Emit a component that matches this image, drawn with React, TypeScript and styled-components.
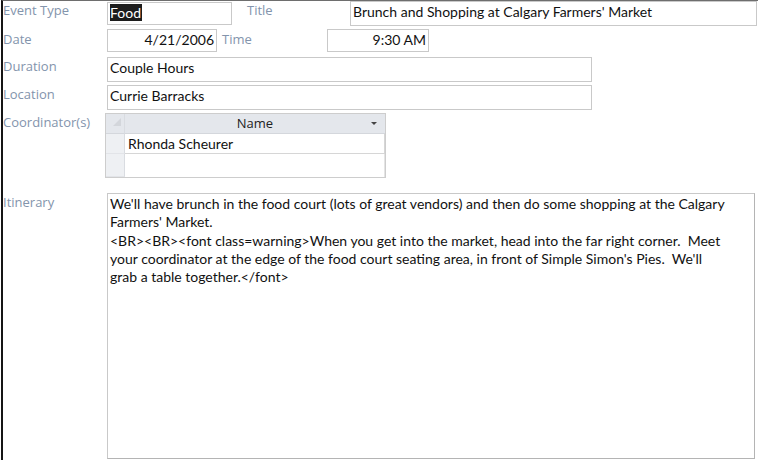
import React from "react";
import styled, { createGlobalStyle } from "styled-components";

const GlobalStyle = createGlobalStyle`
  html, body {
    margin: 0;
    padding: 0;
    background: #ffffff;
  }
  body {
    font-family: "Lato", "Open Sans", sans-serif;
  }
`;

const Frame = styled.div`
  width: 757px;
  height: 460px;
  margin-left: 1px;
  border-left: 2px solid #151515;
  border-top: 1px solid #6e6e6e;
  box-sizing: border-box;
  display: flex;
  flex-direction: column;
`;

interface RowProps {
  $height: number;
  $top?: number;
}

const Row = styled.div<RowProps>`
  display: flex;
  align-items: flex-start;
  height: ${p => p.$height}px;
  margin-top: ${p => p.$top || 0}px;
`;

interface LabelProps {
  $width?: number;
  $pad?: number;
  $indent?: number;
}

const Label = styled.div<LabelProps>`
  width: ${p => p.$width || 104}px;
  flex-shrink: 0;
  padding-top: ${p => p.$pad ?? 2}px;
  padding-left: ${p => p.$indent || 0}px;
  font-family: "Open Sans", sans-serif;
  font-size: 13px;
  line-height: 17px;
  color: #8394ac;
  box-sizing: border-box;
  white-space: nowrap;
`;

interface FieldProps {
  $width: number;
  $height: number;
  $top?: number;
  $align?: string;
}

const Field = styled.div<FieldProps>`
  width: ${p => p.$width}px;
  height: ${p => p.$height}px;
  margin-top: ${p => p.$top || 0}px;
  border: 1px solid #c9c9c9;
  box-sizing: border-box;
  padding: 1px 2px 0 2px;
  font-family: "Lato", sans-serif;
  font-size: 14px;
  line-height: 18px;
  color: #111111;
  text-align: ${p => p.$align || "left"};
  white-space: nowrap;
  overflow: hidden;
  flex-shrink: 0;
`;

const Selected = styled.span`
  background: #1c1c1c;
  color: #ffffff;
  padding: 0 1px 0 0;
`;

const Spacer = styled.div<{ $width: number }>`
  width: ${p => p.$width}px;
  flex-shrink: 0;
`;

const Subform = styled.div`
  margin-left: -2px;
  width: 281px;
  height: 65px;
  border: 1px solid #cdcdcd;
  box-sizing: border-box;
  display: grid;
  grid-template-columns: 19px 1fr;
  grid-template-rows: 20px 20px 1fr;
  background: #ffffff;
`;

const CornerCell = styled.div`
  background: #e4e7ec;
  border-right: 1px solid #d9dce1;
  border-bottom: 1px solid #d4d7dc;
  display: flex;
  align-items: flex-start;
  justify-content: flex-end;
  padding: 4px 3px 0 0;
  box-sizing: border-box;
`;

const HeaderCell = styled.div`
  position: relative;
  background: #e4e7ec;
  border-bottom: 1px solid #d4d7dc;
  font-family: "Open Sans", sans-serif;
  font-size: 13px;
  line-height: 19px;
  color: #222222;
  text-align: center;
  box-sizing: border-box;
`;

const DropArrow = styled.span`
  position: absolute;
  right: 8px;
  top: 8px;
  width: 0;
  height: 0;
  border-left: 3px solid transparent;
  border-right: 3px solid transparent;
  border-top: 3px solid #444444;
`;

const SelectorCell = styled.div`
  background: #eef0f3;
  border-right: 1px solid #d9dce1;
  border-bottom: 1px solid #e2e4e8;
  box-sizing: border-box;
`;

const DataCell = styled.div`
  border-bottom: 1px solid #d6d6d6;
  border-right: 1px solid #d6d6d6;
  padding-left: 3px;
  font-family: "Lato", sans-serif;
  font-size: 14px;
  line-height: 19px;
  color: #111111;
  box-sizing: border-box;
`;

const EmptyCell = styled.div`
  border-right: 1px solid #e4e4e4;
  box-sizing: border-box;
`;

const Memo = styled.div`
  width: 648px;
  height: 266px;
  border: 1px solid #c9c9c9;
  border-right-color: #b4b4b4;
  border-bottom-color: #b4b4b4;
  box-sizing: border-box;
  padding: 1px 2px 0 2px;
  font-family: "Lato", sans-serif;
  font-size: 14px;
  line-height: 18.3px;
  color: #111111;
`;

const MemoLine = styled.div`
  white-space: pre;
`;

const itinerary = [
  "We'll have brunch in the food court (lots of great vendors) and then do some shopping at the Calgary",
  "Farmers' Market.",
  "<BR><BR><font class=warning>When you get into the market, head into the far right corner.  Meet",
  "your coordinator at the edge of the food court seating area, in front of Simple Simon's Pies.  We'll",
  "grab a table together.</font>",
];

const CornerMark = () => (
  <svg width="8" height="8" viewBox="0 0 8 8">
    <path d="M0 8 L8 0 L8 8 Z" fill="#d3d6db" />
  </svg>
);

export default function App() {
  return (
    <>
      <GlobalStyle />
      <Frame>
        <Row $height={26}>
          <Label $pad={1}>Event Type</Label>
          <Field $width={125} $height={23} $top={1}>
            <Selected>Food</Selected>
          </Field>
          <Label $width={118} $pad={1} $indent={15}>Title</Label>
          <Field $width={407} $height={25}>Brunch and Shopping at Calgary Farmers' Market</Field>
        </Row>
        <Row $height={24} $top={2}>
          <Label $pad={2}>Date</Label>
          <Field $width={110} $height={23} $align="right">4/21/2006</Field>
          <Spacer $width={5} />
          <Label $width={105} $pad={2}>Time</Label>
          <Field $width={102} $height={23} $align="right">9:30 AM</Field>
        </Row>
        <Row $height={25} $top={4}>
          <Label $pad={1}>Duration</Label>
          <Field $width={485} $height={25}>Couple Hours</Field>
        </Row>
        <Row $height={25} $top={3}>
          <Label $pad={1}>Location</Label>
          <Field $width={485} $height={25}>Currie Barracks</Field>
        </Row>
        <Row $height={65} $top={3}>
          <Label $pad={1}>Coordinator(s)</Label>
          <Subform>
            <CornerCell><CornerMark /></CornerCell>
            <HeaderCell>
              Name
              <DropArrow />
            </HeaderCell>
            <SelectorCell />
            <DataCell>Rhonda Scheurer</DataCell>
            <SelectorCell />
            <EmptyCell />
          </Subform>
        </Row>
        <Row $height={266} $top={15}>
          <Label $pad={1}>Itinerary</Label>
          <Memo>
            {itinerary.map((line, i) => (
              <MemoLine key={i}>{line}</MemoLine>
            ))}
          </Memo>
        </Row>
      </Frame>
    </>
  );
}
